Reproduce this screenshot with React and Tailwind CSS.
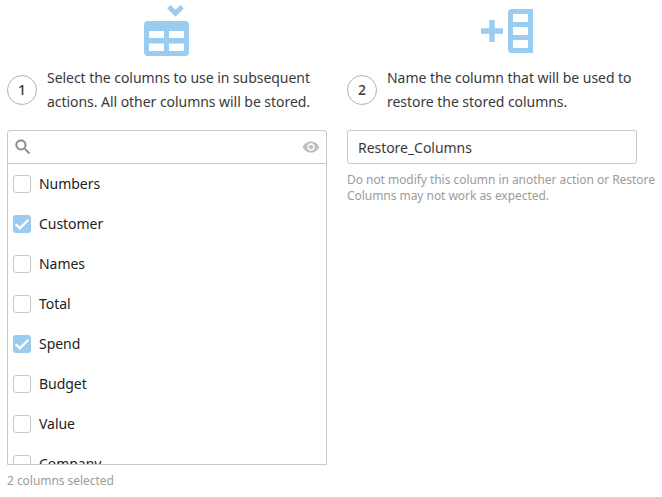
const columns = [
  { name: 'Numbers', checked: false },
  { name: 'Customer', checked: true },
  { name: 'Names', checked: false },
  { name: 'Total', checked: false },
  { name: 'Spend', checked: true },
  { name: 'Budget', checked: false },
  { name: 'Value', checked: false },
  { name: 'Company', checked: false },
];

function TableIcon() {
  return (
    <svg width="46" height="56" viewBox="0 0 46 56" fill="#99ccee" aria-hidden="true">
      <path d="M23.2 8.4 26.6 5l4.9 4.8L36.4 5l3.4 3.4-8.3 8.3z" />
      <path
        fillRule="evenodd"
        d="M4 21h37a4 4 0 0 1 4 4v27a4 4 0 0 1-4 4H4a4 4 0 0 1-4-4V25a4 4 0 0 1 4-4zM5 31v7h15v-7zm20 0v7h15v-7zM5 43.5V51h15v-7.5zm20 0V51h15v-7.5z"
      />
    </svg>
  );
}

function AddColumnIcon() {
  return (
    <svg width="52" height="54" viewBox="0 0 52 54" fill="#99ccee" aria-hidden="true">
      <path d="M8.3 20h5.4v8.3H22v5.4h-8.3V42H8.3v-8.3H0v-5.4h8.3z" />
      <path
        fillRule="evenodd"
        d="M31 9h21v44H31a4 4 0 0 1-4-4V13a4 4 0 0 1 4-4zm1 5v8h15v-8zm0 13v8h15v-8zm0 13v8h15v-8z"
      />
    </svg>
  );
}

function SearchIcon() {
  return (
    <svg width="20" height="20" viewBox="0 0 24 24" fill="#8c8c8c" stroke="#8c8c8c" strokeWidth="0.4" aria-hidden="true">
      <path d="M15.5 14h-.79l-.28-.27A6.47 6.47 0 0 0 16 9.5 6.5 6.5 0 1 0 9.5 16c1.61 0 3.09-.59 4.23-1.57l.27.28v.79l5 4.99L20.49 19l-4.99-5zm-6 0C7.01 14 5 11.99 5 9.5S7.01 5 9.5 5 14 7.01 14 9.5 11.99 14 9.5 14z" />
    </svg>
  );
}

function EyeIcon() {
  return (
    <svg width="18" height="18" viewBox="0 0 24 24" fill="#bfbfbf" aria-hidden="true">
      <path d="M12 4.5C7 4.5 2.73 7.61 1 12c1.73 4.39 6 7.5 11 7.5s9.27-3.11 11-7.5c-1.73-4.39-6-7.5-11-7.5zM12 17c-2.76 0-5-2.24-5-5s2.24-5 5-5 5 2.24 5 5-2.24 5-5 5zm0-8c-1.66 0-3 1.34-3 3s1.34 3 3 3 3-1.34 3-3-1.34-3-3-3z" />
    </svg>
  );
}

function Checkbox({ checked }) {
  if (!checked) {
    return <span className="size-[18px] shrink-0 rounded-[3px] border border-[#c8c8c8] bg-white" />;
  }
  return (
    <span className="size-[18px] shrink-0 rounded-[3px] bg-[#99ccee]">
      <svg width="18" height="18" viewBox="0 0 18 18" fill="none" stroke="#fff" strokeWidth="2.3" aria-hidden="true">
        <path d="M2.7 9.2 6.8 13.3 15.4 4.7" />
      </svg>
    </span>
  );
}

function StepHeader({ number, children }) {
  return (
    <div className="mt-2.5 flex h-12 items-center gap-2.5">
      <span className="flex size-[30px] shrink-0 items-center justify-center rounded-full border border-[#b3b3b3] text-sm font-medium">
        {number}
      </span>
      <p className="text-sm leading-6 whitespace-nowrap">{children}</p>
    </div>
  );
}

export default function App() {
  return (
    <main className="flex h-[497px] w-[662px] gap-5 overflow-hidden bg-white pl-[7px] font-['Noto_Sans','Open_Sans',sans-serif] tracking-[-0.045px] text-[#3a3a3a]">
      <section className="w-80 shrink-0">
        <div className="flex h-14 justify-center">
          <TableIcon />
        </div>
        <StepHeader number="1">
          Select the columns to use in subsequent
          <br />
          actions. All other columns will be stored.
        </StepHeader>
        <div className="mt-4 h-[335px] overflow-hidden rounded-t-[3px] border border-[#c8c8c8]">
          <div className="flex h-[33px] items-center justify-between border-b border-[#c8c8c8] pr-1.5 pl-[5px]">
            <SearchIcon />
            <EyeIcon />
          </div>
          <ul>
            {columns.map((column) => (
              <li key={column.name} className="flex h-10 items-center gap-2 pl-[5px] text-sm text-[#222]">
                <Checkbox checked={column.checked} />
                {column.name}
              </li>
            ))}
          </ul>
        </div>
        <p className="mt-2 text-xs leading-4 text-[#9c9c9c]">2 columns selected</p>
      </section>
      <section className="w-[315px] shrink-0">
        <div className="flex h-14 pl-[134px]">
          <AddColumnIcon />
        </div>
        <StepHeader number="2">
          Name the column that will be used to
          <br />
          restore the stored columns.
        </StepHeader>
        <div className="mt-4 flex h-[34px] w-[290px] items-center rounded-[3px] border border-[#c8c8c8] pt-0.5 pl-2.5 text-sm">
          Restore_Columns
        </div>
        <p className="mt-2 text-xs leading-4 whitespace-nowrap text-[#9c9c9c]">
          Do not modify this column in another action or Restore
          <br />
          Columns may not work as expected.
        </p>
      </section>
    </main>
  );
}
